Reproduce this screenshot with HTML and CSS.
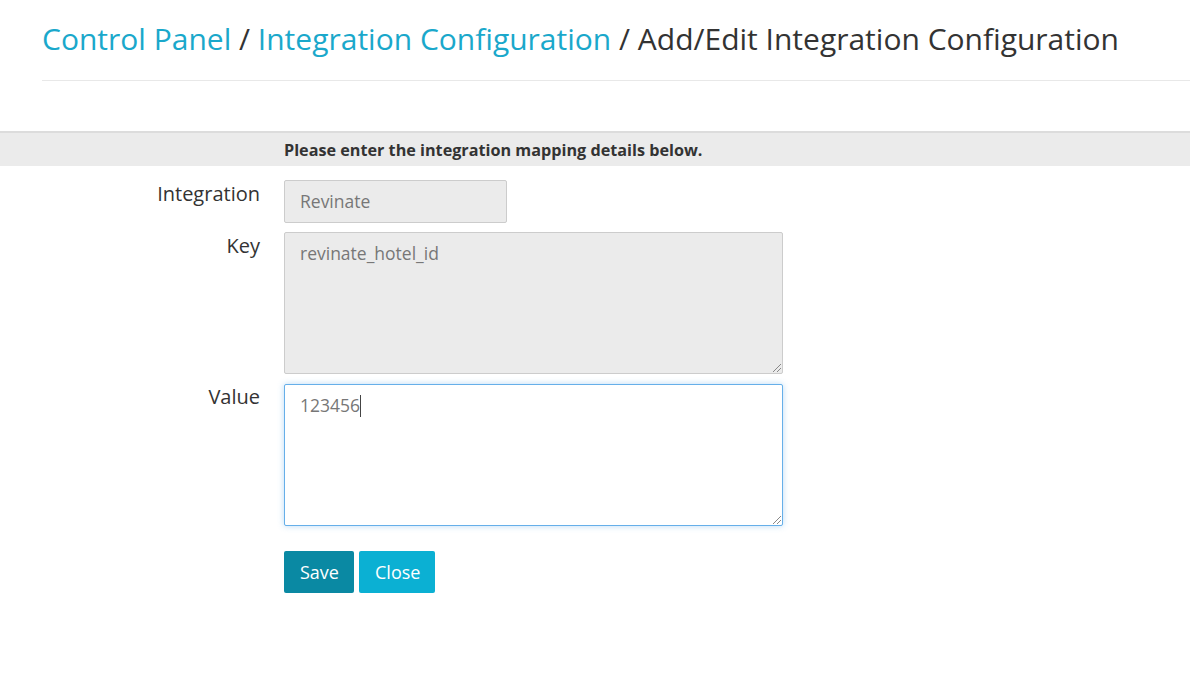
FILE: index.html
```html
<!DOCTYPE html>
<html>
<head>
<meta charset="utf-8">
<link rel="stylesheet" href="styles.css">
</head>
<body>
<div class="header">
  <h1 class="crumbs"><a class="link">Control Panel</a> / <a class="link">Integration Configuration</a> / Add/Edit Integration Configuration</h1>
</div>
<div class="band"><div class="band-text">Please enter the integration mapping details below.</div></div>
<form class="form">
  <div class="row">
    <label class="label">Integration</label>
    <div class="field"><div class="input small disabled">Revinate</div></div>
  </div>
  <div class="row">
    <label class="label">Key</label>
    <div class="field"><div class="input area disabled">revinate_hotel_id<span class="grip"></span></div></div>
  </div>
  <div class="row">
    <label class="label">Value</label>
    <div class="field"><div class="input area focused">123456<span class="caret"></span><span class="grip"></span></div></div>
  </div>
  <div class="row buttons">
    <div class="label"></div>
    <div class="field btns">
      <button type="button" class="btn save">Save</button>
      <button type="button" class="btn close">Close</button>
    </div>
  </div>
</form>
</body>
</html>
```
FILE: styles.css
```css
html, body { margin: 0; padding: 0; background: #fff; }
body { font-family: "Open Sans", "Noto Sans", sans-serif; color: #333; }
.header { margin: 0 0 0 42px; border-bottom: 1px solid #e8e8e8; height: 80px; }
.crumbs { margin: 0; padding-top: 18px; font-size: 30px; font-weight: 400; line-height: 42px; color: #333; white-space: nowrap; }
.link { color: #1aa8cb; }
.band { margin-top: 50px; background: #ebebeb; border-top: 2px solid #dcdcdc; height: 33px; }
.band-text { margin-left: 284px; font-size: 16.2px; font-weight: 700; line-height: 34px; color: #333; }
.form { padding-top: 14px; }
.row { display: flex; align-items: flex-start; margin-bottom: 9px; }
.label { width: 260px; text-align: right; font-size: 20px; line-height: 28px; padding-top: 0; box-sizing: border-box; color: #333; }
.field { margin-left: 24px; }
.input { box-sizing: border-box; border: 1px solid #ccc; border-radius: 2px; font-size: 17.5px; color: #777; padding: 8px 15px 10px; line-height: 24px; position: relative; }
.small { width: 223px; height: 43px; }
.area { width: 499px; height: 142px; }
.disabled { background: #ebebeb; }
.focused { background: #fff; border-color: #66afe9; box-shadow: 0 0 6px rgba(102,175,233,.45); margin-top: 1px; }
.caret { display: inline-block; width: 1px; height: 22px; background: #444; vertical-align: -5px; }
.grip { position: absolute; right: 1px; bottom: 1px; width: 8px; height: 8px;
  background: linear-gradient(135deg, transparent 45%, #888 45%, #888 52%, transparent 52%, transparent 70%, #888 70%, #888 77%, transparent 77%); }
.buttons { margin-top: 25px; }
.btns { display: flex; gap: 5px; }
.btn { height: 42px; border: none; border-radius: 2px; color: #fff; font-family: "Open Sans", sans-serif; font-size: 18px; padding: 0 16px; }
.save { background: #0a89a3; width: 70px; }
.close { background: #0bb0d3; width: 76px; }
```
